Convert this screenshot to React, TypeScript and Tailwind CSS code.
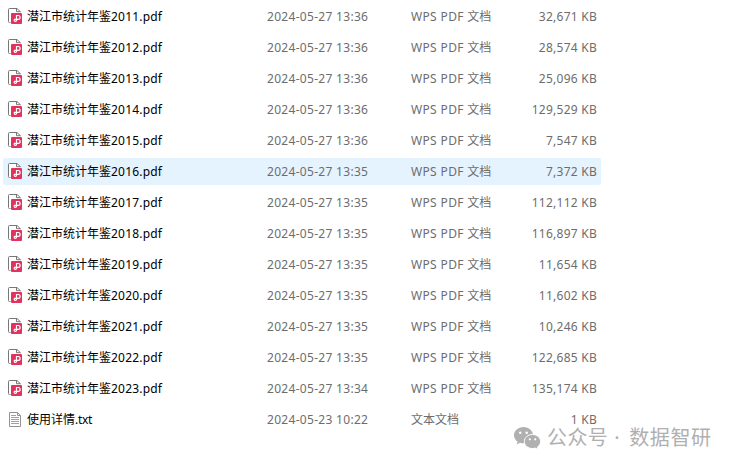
type FileRow = {
  name: string;
  ext: string;
  date: string;
  size: string;
};

const files: FileRow[] = [
  { name: "潜江市统计年鉴", ext: "2011.pdf", date: "2024-05-27 13:36", size: "32,671 KB" },
  { name: "潜江市统计年鉴", ext: "2012.pdf", date: "2024-05-27 13:36", size: "28,574 KB" },
  { name: "潜江市统计年鉴", ext: "2013.pdf", date: "2024-05-27 13:36", size: "25,096 KB" },
  { name: "潜江市统计年鉴", ext: "2014.pdf", date: "2024-05-27 13:36", size: "129,529 KB" },
  { name: "潜江市统计年鉴", ext: "2015.pdf", date: "2024-05-27 13:36", size: "7,547 KB" },
  { name: "潜江市统计年鉴", ext: "2016.pdf", date: "2024-05-27 13:35", size: "7,372 KB" },
  { name: "潜江市统计年鉴", ext: "2017.pdf", date: "2024-05-27 13:35", size: "112,112 KB" },
  { name: "潜江市统计年鉴", ext: "2018.pdf", date: "2024-05-27 13:35", size: "116,897 KB" },
  { name: "潜江市统计年鉴", ext: "2019.pdf", date: "2024-05-27 13:35", size: "11,654 KB" },
  { name: "潜江市统计年鉴", ext: "2020.pdf", date: "2024-05-27 13:35", size: "11,602 KB" },
  { name: "潜江市统计年鉴", ext: "2021.pdf", date: "2024-05-27 13:35", size: "10,246 KB" },
  { name: "潜江市统计年鉴", ext: "2022.pdf", date: "2024-05-27 13:35", size: "122,685 KB" },
  { name: "潜江市统计年鉴", ext: "2023.pdf", date: "2024-05-27 13:34", size: "135,174 KB" },
  { name: "使用详情", ext: ".txt", date: "2024-05-23 10:22", size: "1 KB" },
];

function PdfIcon() {
  return (
    <svg width="16" height="16" viewBox="0 0 16 16" fill="none" className="mb-px shrink-0">
      <path d="M1.5.5H9L12.5 4v11.500h-11a1 1 0 0 1-1-1v-13a1 1 0 0 1 1-1z" fill="#fff" />
      <path d="M2.500 14.500h-1a1 1 0 0 1-1-1v-12a1 1 0 0 1 1-1H9l3.500 3.300" stroke="#777" />
      <path d="M8.500.5v3.200h4" stroke="#777" />
      <rect x="3" y="5" width="11" height="11" rx="1" fill="#e2325f" />
      <path
        d="M8.500 11.500v-4h1.700a1.900 1.900 0 0 1 0 3.800H6.500a1.200 1.200 0 1 0 2 1.200v-1"
        stroke="#fff"
        strokeWidth="1.200"
      />
    </svg>
  );
}

function TxtIcon() {
  return (
    <svg width="16" height="16" viewBox="0 0 16 16" fill="none" className="shrink-0">
      <path d="M1.500.5h8l3 3v11h-11z" fill="#fff" stroke="#929292" />
      <path d="M9.500.5v3h3" stroke="#929292" />
      <path d="M3 3.500h5M3 5.500h8M3 7.500h8M3 9.500h8M3 11.500h8" stroke="#a0a0a0" />
    </svg>
  );
}

function WechatIcon() {
  return (
    <svg width="28" height="24" viewBox="0 0 28 24" className="shrink-0">
      <path
        d="M10.500 1C5.200 1 1 4.700 1 9.200c0 2.600 1.400 4.900 3.600 6.400L3.700 18.500l3.400-1.800c1.100.4 2.200.6 3.400.6 5.300 0 9.500-3.600 9.500-8.100S15.800 1 10.500 1z"
        fill="#b0b0b0"
      />
      <path
        d="M19.500 8.500c-4.600 0-8.200 3.100-8.200 7s3.600 7 8.200 7c1 0 2-.2 2.900-.4l2.700 1.400-.7-2.400c1.900-1.300 3.200-3.300 3.200-5.600 0-3.900-3.600-7-8.100-7z"
        fill="#b0b0b0"
        stroke="#fff"
        strokeWidth="1"
      />
      <circle cx="7.200" cy="6.700" r="1.250" fill="#fff" />
      <circle cx="13.700" cy="6.700" r="1.250" fill="#fff" />
      <circle cx="16.800" cy="13.300" r="1.100" fill="#fff" />
      <circle cx="22.200" cy="13.300" r="1.100" fill="#fff" />
    </svg>
  );
}

export default function App() {
  return (
    <main className="relative h-[467px] w-[735px] overflow-hidden bg-white pt-[3px] pl-[3px] font-['Noto_Sans','Noto_Sans_CJK_SC',sans-serif] text-[12px] text-[#6d6d6d]">
      <ul className="flex w-[598px] flex-col gap-1">
        {files.map((file) => (
          <li
            key={file.name + file.ext}
            className={`flex h-[27px] items-center rounded-xs pr-1 pl-[5px] leading-[27px] whitespace-nowrap ${
              file.ext === "2016.pdf" ? "bg-[#e5f3ff]" : ""
            }`}
          >
            <div className="flex w-[259px] items-center gap-[3px] text-black">
              {file.ext === ".txt" ? <TxtIcon /> : <PdfIcon />}
              <span>
                {file.name}
                <span className={file.ext === ".txt" ? "tracking-[-0.3px]" : "tracking-[0.2px]"}>
                  {file.ext}
                </span>
              </span>
            </div>
            <span className="w-[144px] tracking-[0.3px]">{file.date}</span>
            <span className="w-[100px]">
              {file.ext === ".txt" ? (
                "文本文档"
              ) : (
                <>
                  <span className="tracking-[0.35px]">WPS PDF </span>文档
                </>
              )}
            </span>
            <span className="flex-1 text-right tracking-[0.25px]">{file.size}</span>
          </li>
        ))}
      </ul>

      {/* Watermark over the list */}
      <div className="absolute top-[426px] left-[513px] flex items-center gap-[6px] text-[20px] leading-6 whitespace-nowrap text-[#b0b0b0]">
        <WechatIcon />
        <span className="flex">
          <span className="tracking-[0.4px]">公众号</span>
          <span className="w-[21px] pl-[6px]">·</span>
          <span className="tracking-[0.6px]">数据智研</span>
        </span>
      </div>
    </main>
  );
}
